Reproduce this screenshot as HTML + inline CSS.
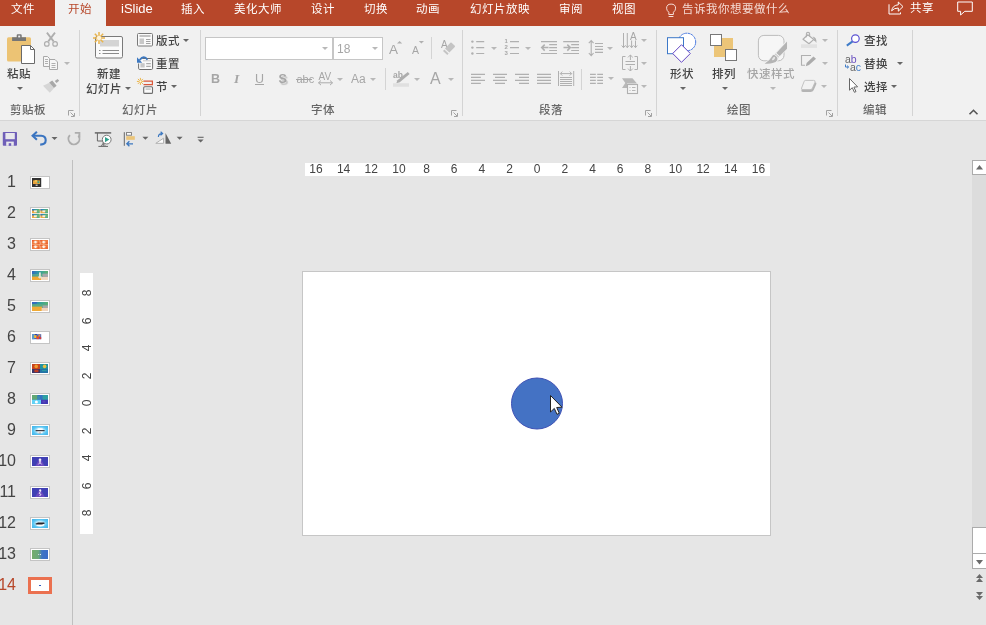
<!DOCTYPE html>
<html lang="zh-CN">
<head>
<meta charset="utf-8">
<title>PowerPoint</title>
<style>
html,body{margin:0;padding:0;}
body{width:986px;height:625px;overflow:hidden;background:#e6e6e6;position:relative;font-family:"Liberation Sans","Noto Sans CJK SC",sans-serif;font-size:12px;color:#444;}
.abs,.t,.tab,.gl,.sep,.arr,svg{position:absolute;}
#tabbar{position:absolute;left:0;top:0;width:986px;height:26px;background:#b7472a;}
.tab{top:-1px;height:20px;line-height:20px;color:#fff;font-size:11.5px;letter-spacing:.5px;font-weight:400;white-space:nowrap;}
#tabactive{position:absolute;left:55px;top:0;width:51px;height:26px;background:#f1f1f1;}
#ribbon{position:absolute;left:0;top:26px;width:986px;height:94px;background:#f1f1f1;border-bottom:1px solid #d6d6d6;}
.t{white-space:nowrap;font-size:11.5px;letter-spacing:.5px;font-weight:500;line-height:14px;height:14px;color:#444;}
.gl{white-space:nowrap;font-size:11.5px;letter-spacing:.5px;font-weight:500;line-height:14px;height:14px;color:#666;top:103px;}
.dis{color:#a6a6a6;}
.sep{width:1px;background:#d4d4d4;}
.gsep{top:30px;height:86px;}
.arr{width:0;height:0;border-left:3px solid transparent;border-right:3px solid transparent;border-top:3px solid #666;}
.arr.l{border-top-color:#b8b8b8;}
.box{position:absolute;background:#fff;border:1px solid #c6c6c6;box-sizing:border-box;}

.rn{position:absolute;width:20px;text-align:center;font-size:12px;line-height:14px;color:#444;}
.rv{position:absolute;width:20px;height:14px;text-align:center;font-size:12px;line-height:14px;color:#444;transform:rotate(-90deg);}
.sn{position:absolute;left:-20px;width:36px;text-align:right;font-size:16px;line-height:20px;height:20px;}
.th{position:absolute;left:30px;width:20px;height:13px;border:1px solid #c4c4c4;box-sizing:border-box;background:#fff;overflow:hidden;}
.th i{position:absolute;display:block;left:.5px;top:.5px;right:.5px;bottom:.5px;}

#tabbar,#rib-content,#panel,#editor{will-change:transform;}
#th14 i{left:0;top:0;right:0;bottom:0;}
#th14 i:after{content:"";position:absolute;left:8px;top:5px;width:2px;height:1.3px;background:#2f5cc0;}
</style>
</head>
<body>
<!-- TAB BAR -->
<div id="tabbar">
  <div id="tabactive"></div>
  <div class="tab" style="left:11px;">文件</div>
  <div class="tab" style="left:68px;color:#b7472a;">开始</div>
  <div class="tab" style="left:121px;top:-1.5px;letter-spacing:0;font-size:13px;">iSlide</div>
  <div class="tab" style="left:181px;">插入</div>
  <div class="tab" style="left:234px;">美化大师</div>
  <div class="tab" style="left:311px;">设计</div>
  <div class="tab" style="left:364px;">切换</div>
  <div class="tab" style="left:416px;">动画</div>
  <div class="tab" style="left:470px;">幻灯片放映</div>
  <div class="tab" style="left:559px;">审阅</div>
  <div class="tab" style="left:612px;">视图</div>
  <div class="tab" style="left:682px;color:#f4d9d2;">告诉我你想要做什么</div>
  <div class="tab" style="left:910px;top:-2px;">共享</div>
</div>
<!-- RIBBON -->
<div id="ribbon"></div>
<div id="rib-content">
  <!-- clipboard -->
  <div class="t" style="left:7px;top:67px;">粘贴</div>
  <div class="arr" style="left:17px;top:87px;"></div>
  <div class="arr l" style="left:64px;top:62px;"></div>
  <div class="gl" style="left:10px;">剪贴板</div>
  <div class="sep gsep" style="left:79px;"></div>
  <!-- slides -->
  <div class="t" style="left:97px;top:67px;">新建</div>
  <div class="t" style="left:86px;top:82px;">幻灯片</div>
  <div class="arr" style="left:125px;top:87px;"></div>
  <div class="t" style="left:156px;top:34px;">版式</div>
  <div class="arr" style="left:183px;top:39px;"></div>
  <div class="t" style="left:156px;top:57px;">重置</div>
  <div class="t" style="left:156px;top:80px;">节</div>
  <div class="arr" style="left:171px;top:85px;"></div>
  <div class="gl" style="left:122px;">幻灯片</div>
  <div class="sep gsep" style="left:200px;"></div>
  <!-- font -->
  <div class="box" style="left:205px;top:37px;width:128px;height:23px;"></div>
  <div class="arr l" style="left:322px;top:47px;"></div>
  <div class="box" style="left:333px;top:37px;width:50px;height:23px;"></div>
  <div class="t dis" style="left:337px;top:42px;letter-spacing:0;font-size:12px;">18</div>
  <div class="arr l" style="left:372px;top:47px;"></div>
  <div class="t dis" style="left:211px;top:72px;letter-spacing:0;font-size:12.5px;font-weight:bold;">B</div>
  <div class="t dis" style="left:234px;top:72px;letter-spacing:0;font-size:13.5px;font-style:italic;font-weight:bold;font-family:'Liberation Serif',serif;">I</div>
  <div class="t dis" style="left:255px;top:72px;letter-spacing:0;font-size:12.5px;">U</div>
  <div class="abs" style="left:255px;top:84px;width:9px;height:1px;background:#a6a6a6;"></div>
  <div class="t dis" style="left:278.5px;top:72px;letter-spacing:0;font-size:12.5px;font-weight:bold;text-shadow:1.5px 1.5px 1px #c4c4c4;">S</div>
  <div class="t dis" style="left:296.5px;top:72px;letter-spacing:0;font-size:11px;">abc</div>
  <div class="abs" style="left:296px;top:79px;width:16px;height:1px;background:#a6a6a6;"></div>
  <div class="t dis" style="left:318.5px;top:70px;letter-spacing:0;font-size:10px;">AV</div>
  <div class="arr l" style="left:337px;top:78px;"></div>
  <div class="t dis" style="left:351px;top:72px;letter-spacing:0;font-size:12px;">Aa</div>
  <div class="arr l" style="left:370px;top:78px;"></div>
  <div class="sep" style="left:385px;top:68px;height:22px;"></div>
  <div class="t dis" style="left:393px;top:68.2px;letter-spacing:0;font-size:8.5px;font-weight:bold;">ab</div>
  <div class="arr l" style="left:414px;top:78px;"></div>
  <div class="t dis" style="left:430px;top:71.5px;letter-spacing:0;font-size:16px;">A</div>
  <div class="arr l" style="left:448px;top:78px;"></div>
  <div class="t dis" style="left:389px;top:43px;letter-spacing:0;font-size:13.5px;">A</div>
  <div class="t dis" style="left:412px;top:43px;letter-spacing:0;font-size:10.5px;">A</div>
  <div class="t dis" style="left:441px;top:38px;letter-spacing:0;font-size:10px;">A</div>
  <div class="sep" style="left:431px;top:37px;height:22px;"></div>
  <div class="gl" style="left:311px;">字体</div>
  <div class="sep gsep" style="left:462px;"></div>
  <!-- paragraph -->
  <div class="arr l" style="left:491px;top:47px;"></div>
  <div class="arr l" style="left:525px;top:47px;"></div>
  <div class="arr l" style="left:607px;top:47px;"></div>
  <div class="arr l" style="left:608px;top:77px;"></div>
  <div class="arr l" style="left:641px;top:39px;"></div>
  <div class="arr l" style="left:641px;top:62px;"></div>
  <div class="arr l" style="left:641px;top:85px;"></div>
  <div class="sep" style="left:581px;top:69px;height:21px;"></div>
  <div class="t dis" style="left:504.5px;top:38px;letter-spacing:0;font-size:6px;line-height:6px;height:18px;width:4px;white-space:normal;font-weight:bold;">1<br>2<br>3</div>
  <div class="t dis" style="left:630px;top:30px;letter-spacing:0;font-size:10px;">A</div>
  <div class="gl" style="left:539px;">段落</div>
  <div class="sep gsep" style="left:656px;"></div>
  <!-- drawing -->
  <div class="t" style="left:670px;top:67px;">形状</div>
  <div class="arr" style="left:680px;top:87px;"></div>
  <div class="t" style="left:712px;top:67px;">排列</div>
  <div class="arr" style="left:722px;top:87px;"></div>
  <div class="t dis" style="left:747px;top:67px;">快速样式</div>
  <div class="arr l" style="left:770px;top:87px;"></div>
  <div class="arr l" style="left:822px;top:39px;"></div>
  <div class="arr l" style="left:822px;top:62px;"></div>
  <div class="arr l" style="left:821px;top:85px;"></div>
  <div class="gl" style="left:727px;">绘图</div>
  <div class="sep gsep" style="left:837px;"></div>
  <!-- editing -->
  <div class="t" style="left:864px;top:34px;">查找</div>
  <div class="t" style="left:864px;top:57px;">替换</div>
  <div class="arr" style="left:897px;top:62px;"></div>
  <div class="t" style="left:864px;top:80px;">选择</div>
  <div class="arr" style="left:891px;top:85px;"></div>
  <div class="t" style="left:845px;top:54px;letter-spacing:0;font-size:10.5px;line-height:11px;height:11px;color:#666;">a<span style="color:#6a50c0">b</span></div>
  <div class="t" style="left:850px;top:61.5px;letter-spacing:0;font-size:10.5px;line-height:11px;height:11px;color:#666;">a<span style="color:#3f7cc8">c</span></div>
  <div class="gl" style="left:863px;">编辑</div>
  <div class="sep gsep" style="left:912px;"></div>
</div>
<!-- ICONS -->
<div id="icons">
<svg id="ribsvg" style="left:0;top:0;" width="986" height="160" viewBox="0 0 986 160" fill="none">
<!-- paste -->
<g id="ic-paste">
  <rect x="7" y="37.3" width="24" height="24.3" rx="1.5" fill="#ecc374"/>
  <path d="M16.7 37.3 V35.2 Q16.7 34.2 17.7 34.2 H20.7 Q21.7 34.2 21.7 35.2 V37.3 H26 V41 H12.1 V37.3 Z" fill="#767676"/>
  <rect x="18.2" y="35.6" width="2" height="1.8" fill="#f1f1f1"/>
  <path d="M21.5 45.5 H30.5 L34.5 49.5 V63.5 H21.5 Z" fill="#fff" stroke="#6a6a6a" stroke-width="1"/>
  <path d="M30.5 45.5 V49.5 H34.5" stroke="#6a6a6a" stroke-width="1" fill="none"/>
</g>
<!-- cut -->
<g id="ic-cut" stroke="#aeaeae" fill="none">
  <path d="M46.9 32.6 L53.6 41.4 M55 32.6 L48.3 41.4" stroke-width="1.8"/>
  <circle cx="46.8" cy="43.9" r="2.3" stroke-width="1.2"/>
  <circle cx="55.1" cy="43.9" r="2.3" stroke-width="1.2"/>
</g>
<!-- copy -->
<g id="ic-copy" stroke="#a8a8a8" stroke-width="1" fill="#f6f6f6">
  <path d="M43.5 56.5 H47.5 L49.5 58.5 V66.5 H43.5 Z"/>
  <path d="M49.5 59.5 H55 L57.5 62 V69.5 H49.5 Z"/>
  <path d="M45 59.5 H48 M45 61.5 H48 M45 63.5 H48 M51.5 63.5 H55.5 M51.5 65.5 H55.5 M51.5 67.5 H55.5" stroke-width=".9"/>
</g>
<!-- format painter -->
<g id="ic-fp">
  <path d="M43 85.8 L49.4 82.8 L53.9 88.3 L49.8 92.8 Z" fill="#d6d6d6"/>
  <path d="M49.2 82.6 L52.3 80.6 L56.6 85.7 L53.9 88.1 Z" fill="#a8a8a8"/>
  <path d="M54.8 80.9 L57.6 78.9 L59.2 80.7 L56.5 83 Z" fill="#a8a8a8"/>
</g>
<!-- dialog launchers -->
<g id="ic-dl" stroke="#a2a2a2" stroke-width="1" fill="none">
  <path d="M68.5 115.5 V110.5 H73.5"/><path d="M70.5 112.5 L74 116 M74.5 113 V116.5 H71" />
  <path d="M451.5 115.5 V110.5 H456.5"/><path d="M453.5 112.5 L457 116 M457.5 113 V116.5 H454" />
  <path d="M645.5 115.5 V110.5 H650.5"/><path d="M647.5 112.5 L651 116 M651.5 113 V116.5 H648" />
  <path d="M826.5 115.5 V110.5 H831.5"/><path d="M828.5 112.5 L832 116 M832.5 113 V116.5 H829" />
</g>
<!-- new slide -->
<g id="ic-newslide">
  <rect x="95.5" y="36.5" width="27" height="21.5" rx="1.5" fill="#fafafa" stroke="#7a7a7a" stroke-width="1"/>
  <rect x="100" y="40" width="19" height="6.5" fill="#d4d4d4"/>
  <path d="M102.5 50.5 H119 M102.5 53.5 H119" stroke="#8a8a8a" stroke-width="1"/>
  <path d="M99 50.5 H100.5 M99 53.5 H100.5" stroke="#8a8a8a" stroke-width="1"/>
  <g stroke="#e9b44c" stroke-width="1.5">
    <path d="M99 32 V44 M93 38 H105 M94.8 33.8 L103.2 42.2 M103.2 33.8 L94.8 42.2"/>
  </g>
  <circle cx="99" cy="38" r="2.2" fill="#fdf3dc"/>
</g>
<!-- layout -->
<g id="ic-layout">
  <rect x="137.5" y="33.5" width="15" height="12.5" rx="1" fill="#fafafa" stroke="#7a7a7a"/>
  <path d="M139.5 36 H150.5" stroke="#8a8a8a"/>
  <rect x="139.5" y="38.5" width="4.5" height="5.5" fill="#c8c8c8"/>
  <path d="M146 39.5 H150.5 M146 41.5 H150.5 M146 43.5 H150.5" stroke="#9a9a9a" stroke-width=".9"/>
</g>
<!-- reset -->
<g id="ic-reset">
  <rect x="138.6" y="58.5" width="14" height="11" rx="1.2" fill="#fafafa" stroke="#6e6e6e"/>
  <path d="M143 60.8 H151" stroke="#c8c8c8" stroke-width="1"/>
  <rect x="140.4" y="63.2" width="4.3" height="4.3" fill="#c8c8c8"/>
  <path d="M146.2 63.7 H150.8 M146.2 66.3 H150.8" stroke="#9a9a9a" stroke-width="1"/>
  <path d="M136 55 H142 L142.6 58 L140 61.5 V63.5 H136 Z" fill="#f1f1f1"/>
  <path d="M147.4 59.8 Q144 54.2 139.6 60" stroke="#3c78c0" stroke-width="1.8" fill="none"/>
  <path d="M137 57.3 V62.7 H142.2 Z" fill="#3c78c0"/>
</g>
<!-- section -->
<g id="ic-section">
  <path d="M143.5 81.1 H152.4 V84.6 H143.5" stroke="#d9583a" stroke-width="1.2" fill="none"/>
  <rect x="143.7" y="86.8" width="8.8" height="6.6" rx="1" fill="#fafafa" stroke="#6e6e6e" stroke-width="1.1"/>
  <rect x="145.6" y="88.3" width="5.2" height="1.6" fill="#c8c8c8"/>
  <g stroke="#e9b44c" stroke-width="1">
    <path d="M140.4 77.9 V84.9 M136.9 81.4 H143.9 M137.9 78.9 L142.9 83.9 M142.9 78.9 L137.9 83.9"/>
  </g>
  <circle cx="140.4" cy="81.4" r="1.1" fill="#fdf3dc"/>
</g>
<!-- font group icons -->
<g id="ic-font">
  <path d="M397 43.5 L399.6 41 L402.2 43.5 Z" fill="#b0b0b0"/>
  <path d="M418.8 41 H424 L421.4 43.5 Z" fill="#b0b0b0"/>
  <path d="M318.5 82.8 H332.5 M321 80.5 L318.5 82.8 L321 85.1 M330 80.5 L332.5 82.8 L330 85.1" stroke="#ababab" stroke-width="1"/>
  <!-- eraser -->
  <path d="M445 48.6 L450.4 42.8 Q451 42.2 451.6 42.8 L454.8 45.8 Q455.4 46.4 454.8 47 L449.4 52.6 Z" fill="#c4c4c4"/>
  <path d="M443 51 L444.3 49.6 L448.6 53.6 L447.3 55 Z" fill="#c4c4c4"/>
  <!-- highlighter -->
  <path d="M407.8 72 L409.6 74 L399.8 82.2 L396.3 83.2 L397.4 80.2 Z" fill="#adadad"/>
  <rect x="393" y="83.2" width="16" height="3.6" fill="#e0e0e0"/>
</g>
<!-- paragraph icons -->
<g id="ic-para" stroke="#b0b0b0" stroke-width="1.1" fill="none">
  <path d="M476.2 41.6 H484.2 M476.2 47.6 H484.2 M476.2 53.5 H484.2 "/>
  <circle cx="472.4" cy="41.6" r="1.2" fill="#b0b0b0" stroke="none"/>
  <circle cx="472.4" cy="47.6" r="1.2" fill="#b0b0b0" stroke="none"/>
  <circle cx="472.4" cy="53.5" r="1.2" fill="#b0b0b0" stroke="none"/>
  <path d="M510 41.6 H519 M510 47.6 H519 M510 53.5 H519 "/>
  <path d="M541 41.6 H557 M541 53.5 H557 M549.2 44.6 H557 M549.2 47.6 H557 M549.2 50.5 H557 "/>
  <path d="M541.5 47.6 H548.5 M544.7 44.6 L541.7 47.6 L544.7 50.6" stroke-width="1.5"/>
  <path d="M563.2 41.6 H579 M563.2 53.5 H579 M571.2 44.6 H579 M571.2 47.6 H579 M571.2 50.5 H579 "/>
  <path d="M563.5 47.6 H570.5 M567.3 44.6 L570.3 47.6 L567.3 50.6" stroke-width="1.5"/>
  <path d="M595 43.5 H603 M595 46.5 H603 M595 49.4 H603 M595 52.4 H603 "/>
  <path d="M591.2 40.8 V55.4 M588.8 43.2 L591.2 40.6 L593.6 43.2 M588.8 53 L591.2 55.6 L593.6 53"/>
  <path d="M471 74.4 H485 M471 77.4 H480.8 M471 80.4 H485 M471 83.4 H480.8 M493 74.4 H507 M495 77.4 H505 M493 80.4 H507 M495 83.4 H505 M515 74.4 H529 M519 77.4 H529 M515 80.4 H529 M519 83.4 H529 M537 74.4 H551 M537 77.4 H551 M537 80.4 H551 M537 83.4 H551 M590 74.4 H595.8 M597.2 74.4 H603 M590 77.4 H595.8 M597.2 77.4 H603 M590 80.4 H595.8 M597.2 80.4 H603 M590 83.4 H595.8 M597.2 83.4 H603 "/>
  <path d="M560 77.5 H572 M560 79.5 H572 M560 81.5 H572 M560 83.5 H572 M560 85.5 H572 " stroke-width="1"/>
  <path d="M558.5 71 V86 M573.7 71 V86 M560.3 73.6 H571.7 M562.3 71.6 L560.3 73.6 L562.3 75.6 M569.7 71.6 L571.7 73.6 L569.7 75.6" stroke-width="1"/>
  <path d="M623.5 33 V47.5 M627.3 33 V47.5 M621.7 45.5 L623.5 47.7 L625.3 45.5 M625.5 45.5 L627.3 47.7 L629.1 45.5 M631.6 40.5 V47.5 M635.5 40.5 V47.5 M629.9 45.5 L631.6 47.7 L633.3 45.5 M633.8 45.5 L635.5 47.7 L637.2 45.5" stroke-width="1"/>
  <path d="M625.5 56.5 H622.5 V69.5 H625.5 M634.5 56.5 H637.5 V69.5 H634.5" stroke-width="1"/>
  <path d="M630.4 55 V60 M628 57.4 L630.4 55 L632.8 57.4 M630.4 66 V71 M628 68.6 L630.4 71 L632.8 68.6 M625.5 61.5 H635 M625.5 64.5 H635" stroke-width="1"/>
  <path d="M622 78.2 H632.5 L637 83.5 H627 V88 H622 L625.3 83 Z" fill="#b8b8b8" stroke="none"/>
  <rect x="627.5" y="84.5" width="10" height="9" fill="#f4f4f4" stroke-width="1.1"/>
  <path d="M629.5 87.5 H630.5 M632 87.5 H635.5 M629.5 90.5 H630.5 M632 90.5 H635.5" stroke-width=".9"/>
</g>
<!-- drawing icons -->
<g id="ic-draw">
  <circle cx="686.9" cy="42" r="8.8" fill="#fff" stroke="#4a7ae0" stroke-width="1" stroke-dasharray="3 .5"/>
  <rect x="667.5" y="37.7" width="16" height="16" fill="#fff" stroke="#3c78c8" stroke-width="1"/>
  <path d="M681.5 44.7 L690.3 53.5 L681.5 62.3 L672.7 53.5 Z" fill="#fff" stroke="#6244c2" stroke-width="1"/>
  <rect x="714" y="38" width="19" height="19" fill="#ecc578"/>
  <rect x="710.5" y="34.5" width="11" height="11" fill="#fff" stroke="#777" stroke-width="1"/>
  <rect x="725.5" y="49.5" width="11" height="11" fill="#fff" stroke="#777" stroke-width="1"/>
  <!-- quick styles -->
  <rect x="758.4" y="35.4" width="25.6" height="25.4" rx="5.5" fill="#f6f6f6" stroke="#bcbcbc" stroke-width="1"/>
  <g stroke="#f1f1f1" stroke-width="1.6" stroke-linejoin="round" paint-order="stroke" style="paint-order:stroke">
  <path d="M787 41.4 V48.7 L779.7 56 L776.3 52.9 Z" fill="#b4b4b4"/>
  <path d="M775.6 53.6 L779 56.8 L777.8 58 L774.4 54.8 Z" fill="#c4c4c4"/>
  <path d="M774.4 55 Q778.6 57.4 777 60.6 Q774.6 64.2 764.6 63.7 Q769.6 60.6 772 56.4 Q773 54.6 774.4 55 Z" fill="#b4b4b4"/>
  </g>
  <ellipse cx="773.6" cy="58.6" rx="1.1" ry="2" transform="rotate(40 773.6 58.6)" fill="#e6e6e6"/>
  <!-- fill bucket -->
  <path d="M807.8 34.8 L813.8 39.4 L809 43.8 L803 39.2 Z" fill="#f6f6f6" stroke="#b0b0b0" stroke-width="1.2" stroke-linejoin="round"/>
  <path d="M806.4 37.2 V33.8 Q806.4 32.4 808 32.4 Q809.6 32.4 809.6 33.8 V36.4" fill="none" stroke="#b0b0b0" stroke-width="1.1"/>
  <path d="M812.6 36.6 Q817 37.6 816.4 43 Q815.4 41 813.4 40.6 L814.4 39.4 Z" fill="#b0b0b0"/>
  <rect x="801" y="44.3" width="16" height="3.6" fill="#e2e2e2"/>
  <!-- outline -->
  <path d="M811 55.5 H801.5 V65.2 H805" fill="none" stroke="#b0b0b0" stroke-width="1.1"/>
  <path d="M813.4 56.4 L816 58.8 L809 65 L805.8 66.2 L806.6 63 Z" fill="#ababab"/>
  <!-- effects -->
  <path d="M805.4 82.2 H814.6 Q817 82.2 816.2 84.4 L813.6 90.2 Q812.8 92 810.6 92 H803 Q800.8 92 801.6 89.8 L804 83.8 Q804.6 82.2 805.4 82.2 Z" fill="#b4b4b4"/>
  <path d="M805.2 80.4 H813.6 Q815.6 80.4 815 82.2 L812.4 88.2 Q811.8 89.6 810 89.6 H802.8 Q801 89.6 801.6 88 L804 81.8 Q804.4 80.4 805.2 80.4 Z" fill="#f2f2f2" stroke="#bdbdbd" stroke-width=".9"/>
</g>
<!-- editing icons -->
<g id="ic-edit">
  <path d="M852.6 41.4 L846.8 45.6" stroke="#3f7cc8" stroke-width="2"/>
  <circle cx="855.4" cy="38.6" r="3.8" fill="#fff" stroke="#5a52d2" stroke-width="1.2"/>
  <path d="M845.5 64.5 V67 H848.5 M847 65.6 L848.6 67 L847 68.4" stroke="#3f7cc8" stroke-width="1" fill="none"/>
  <path d="M849.5 78.5 V90.2 L852.3 87.7 L854.4 92.3 L856 91.6 L853.9 87.1 L857.6 86.8 Z" fill="#fff" stroke="#666" stroke-width="1" stroke-linejoin="round"/>
  <path d="M969.5 114.3 L973.5 110.3 L977.5 114.3" stroke="#555" stroke-width="1.6" fill="none"/>
</g>
<!-- tab bar icons -->
<g id="ic-tab" stroke="#fff" fill="none" stroke-width="1">
  <path d="M668.8 12.3 Q666.6 10.5 666.6 8.2 Q666.6 4.1 671.1 4.1 Q675.6 4.1 675.6 8.2 Q675.6 10.5 673.4 12.3 V14.5 H668.8 Z M668.6 16.5 H673.4" stroke="#f6dfd9"/>
  <path d="M889 4.3 V14 H900.5 V12.4"/>
  <path d="M891.6 10.8 Q892.6 5.2 898.3 4.8 V2 L903 6.6 L898.3 11.2 V8 Q894 8 891.6 10.8 Z"/>
  <path d="M957.7 2 H972.3 V11.3 H964.8 L960.6 15 V11.3 H957.7 Z"/>
</g>
<!-- QAT icons -->
<g id="ic-qat">
  <rect x="2.8" y="132" width="14.2" height="13.8" rx=".8" fill="#6f5fb8"/>
  <rect x="5.4" y="133" width="9.4" height="6.2" fill="#e8e8ec"/>
  <rect x="6.2" y="141.6" width="7.6" height="4.2" fill="#e8e8ec"/>
  <rect x="8.7" y="143.2" width="2.5" height="2.6" fill="#6f5fb8"/>
  <path d="M33.4 135.8 H41.2 Q45.7 136 45.7 140.2 Q45.7 144.5 40.2 144.6" stroke="#3a74c0" stroke-width="2.1" fill="none"/>
  <path d="M36.9 131.8 L32.6 135.8 L36.9 139.8" stroke="#3a74c0" stroke-width="2.1" fill="none"/>
  <path d="M51.5 137 H57.5 L54.5 140 Z" fill="#666"/>
  <path d="M69.9 135.2 A5.5 5.5 0 1 0 78.4 135.6" stroke="#adadad" stroke-width="1.9" fill="none"/>
  <path d="M74.8 132.9 H79.4 V137.6" stroke="#adadad" stroke-width="1.9" fill="none"/>
  <path d="M94.8 132.9 H111.2" stroke="#666" stroke-width="1.5"/>
  <path d="M97.4 133 V141 H103 M103.2 141 V146 M98.4 146.4 H108" stroke="#666" stroke-width="1" fill="none"/>
  <path d="M103.2 143.5 L101 146 M103.2 143.5 L105.4 146" stroke="#666" stroke-width=".8" fill="none"/>
  <circle cx="106.7" cy="139.6" r="4.4" fill="#fff" stroke="#777" stroke-width="1"/>
  <path d="M105 136.9 L109.4 139.6 L105 142.3 Z" fill="#2fa08c"/>
  <path d="M124.3 132.2 V145.8" stroke="#666" stroke-width="1"/>
  <rect x="126.5" y="132.6" width="5" height="2.6" fill="#fff" stroke="#777" stroke-width=".9"/>
  <rect x="126.2" y="136.2" width="8.6" height="3.6" fill="#ecc578"/>
  <path d="M126.8 143.8 H133 M129.4 141.3 L126.8 143.8 L129.4 146.3" stroke="#3c78c0" stroke-width="1.3" fill="none"/>
  <path d="M142.4 136.8 H148.4 L145.4 139.8 Z" fill="#666"/>
  <path d="M155.8 143.3 H163.6 V138.2 Z" fill="#fff" stroke="#b0b0b0" stroke-width="1"/>
  <path d="M165.5 133 V143.8 H171.2 Z" fill="#666"/>
  <path d="M158.4 137 Q158.4 133.6 162 133.6 M160.6 131.8 L162.6 133.6 L160.6 135.4" stroke="#3c78c0" stroke-width="1.2" fill="none"/>
  <path d="M176.6 136.8 H182.6 L179.6 139.8 Z" fill="#666"/>
  <path d="M197.6 137.3 H203.6" stroke="#666" stroke-width="1.1"/>
  <path d="M197.6 139.6 H203.6 L200.6 142.6 Z" fill="#666"/>
</g>
</svg>
</div>
<!-- QAT -->
<div id="qat"></div>
<!-- SLIDE PANEL -->
<div id="panel">
<svg style="left:0;top:0" width="0" height="0"><defs>
<filter id="bl" x="-10%" y="-10%" width="120%" height="120%"><feGaussianBlur stdDeviation=".45"/></filter>
<linearGradient id="g4" x1="0" x2="1" y1="0" y2="0"><stop offset="0" stop-color="#3468c0"/><stop offset=".45" stop-color="#2fa0a0"/><stop offset="1" stop-color="#62b070"/></linearGradient>
<radialGradient id="g9" cx=".5" cy=".5" r=".6"><stop offset="0" stop-color="#fff"/><stop offset=".35" stop-color="#c8ecfa"/><stop offset=".7" stop-color="#5cc6f2"/><stop offset="1" stop-color="#48b8ec"/></radialGradient>
<linearGradient id="g13" x1="0" x2="1" y1="0" y2="0"><stop offset="0" stop-color="#74ad6c"/><stop offset=".42" stop-color="#6aa87c"/><stop offset=".62" stop-color="#3f74c4"/><stop offset="1" stop-color="#3a6cc8"/></linearGradient>
</defs></svg>
  <div class="sn" style="top:171.5px;color:#444;">1</div>
  <div class="th" id="th1" style="top:176.0px;"><svg style="left:1px;top:1px;" width="16" height="9" viewBox="0 0 16 9"><g filter="url(#bl)"><rect width="9.2" height="9" fill="#303030"/><rect x="1" y="2.4" width="7" height="3.6" fill="#e8a23a"/><rect x="2.6" y="2" width="2.6" height="2" fill="#f0c050"/><rect x="5.4" y="3.2" width="2" height="2" fill="#3aa090"/><rect x="3.6" y="6.6" width="2" height="1.2" fill="#ddd"/></g></svg></div>
  <div class="sn" style="top:202.5px;color:#444;">2</div>
  <div class="th" id="th2" style="top:207.0px;"><svg style="left:1px;top:1px;" width="16" height="9" viewBox="0 0 16 9"><g filter="url(#bl)"><rect width="16" height="9" fill="#fff"/><g transform="translate(0,0)"><rect width="7.6" height="4.1" fill="#e9aa45"/><rect width="7.6" height="1.6" fill="url(#g4)"/><rect x="3.8" y="1.2" width="3.8" height="1.6" fill="#6db578"/><rect x="2" y="1.4" width="3" height="1.8" fill="#f4ece0"/><rect x="4.6" y="2.6" width="3" height="1.5" fill="#58b088"/></g><g transform="translate(8.4,0)"><rect width="7.6" height="4.1" fill="#e9aa45"/><rect width="7.6" height="1.6" fill="url(#g4)"/><rect x="3.8" y="1.2" width="3.8" height="1.6" fill="#6db578"/><rect x="2" y="1.4" width="3" height="1.8" fill="#f4ece0"/><rect x="4.6" y="2.6" width="3" height="1.5" fill="#58b088"/></g><g transform="translate(0,4.9)"><rect width="7.6" height="4.1" fill="#e9aa45"/><rect width="7.6" height="1.6" fill="url(#g4)"/><rect x="3.8" y="1.2" width="3.8" height="1.6" fill="#6db578"/><rect x="2" y="1.4" width="3" height="1.8" fill="#f4ece0"/><rect x="4.6" y="2.6" width="3" height="1.5" fill="#58b088"/></g><g transform="translate(8.4,4.9)"><rect width="7.6" height="4.1" fill="#e9aa45"/><rect width="7.6" height="1.6" fill="url(#g4)"/><rect x="3.8" y="1.2" width="3.8" height="1.6" fill="#6db578"/><rect x="2" y="1.4" width="3" height="1.8" fill="#f4ece0"/><rect x="4.6" y="2.6" width="3" height="1.5" fill="#58b088"/></g></g></svg></div>
  <div class="sn" style="top:233.5px;color:#444;">3</div>
  <div class="th" id="th3" style="top:238.0px;"><svg style="left:1px;top:1px;" width="16" height="9" viewBox="0 0 16 9"><g filter="url(#bl)"><rect width="16" height="9" fill="#f07a3c"/><rect x="7.7" width=".7" height="9" fill="#f8d8c0"/><rect y="4.2" width="16" height=".6" fill="#f5b890"/><g transform="translate(0,0)"><rect x="2.6" y=".8" width="1.8" height="2.6" fill="#fdf4ea"/><rect x="1.6" y="1.6" width="3.8" height=".9" fill="#fdf4ea"/><rect x="0" y="0" width="1.6" height="1.4" fill="#e85a30"/><rect x="5.6" y="2.6" width="2" height="1.4" fill="#ec6232"/></g><g transform="translate(8.2,0)"><rect x="2.6" y=".8" width="1.8" height="2.6" fill="#fdf4ea"/><rect x="1.6" y="1.6" width="3.8" height=".9" fill="#fdf4ea"/><rect x="0" y="0" width="1.6" height="1.4" fill="#e85a30"/><rect x="5.6" y="2.6" width="2" height="1.4" fill="#ec6232"/></g><g transform="translate(0,4.7)"><rect x="2.6" y=".8" width="1.8" height="2.6" fill="#fdf4ea"/><rect x="1.6" y="1.6" width="3.8" height=".9" fill="#fdf4ea"/><rect x="0" y="0" width="1.6" height="1.4" fill="#e85a30"/><rect x="5.6" y="2.6" width="2" height="1.4" fill="#ec6232"/></g><g transform="translate(8.2,4.7)"><rect x="2.6" y=".8" width="1.8" height="2.6" fill="#fdf4ea"/><rect x="1.6" y="1.6" width="3.8" height=".9" fill="#fdf4ea"/><rect x="0" y="0" width="1.6" height="1.4" fill="#e85a30"/><rect x="5.6" y="2.6" width="2" height="1.4" fill="#ec6232"/></g></g></svg></div>
  <div class="sn" style="top:264.5px;color:#444;">4</div>
  <div class="th" id="th4" style="top:269.0px;"><svg style="left:1px;top:1px;" width="16" height="9" viewBox="0 0 16 9"><g filter="url(#bl)"><rect width="16" height="9" fill="url(#g4)"/><rect y="3" width="16" height="3" fill="#5fb088" opacity=".7"/><rect y="5.6" width="9" height="3.4" fill="#f0a832"/><rect x="10.4" y="2.6" width="5.6" height="3.6" fill="#a6a8aa"/><rect x="9" y="6" width="7" height="3" fill="#f2d8c0"/><rect x="7" y="1.4" width="1.8" height="6" fill="#e4e2d6"/><rect x="6.2" y="5.4" width="3.6" height="1.4" fill="#e8e0cc"/></g></svg></div>
  <div class="sn" style="top:295.5px;color:#444;">5</div>
  <div class="th" id="th5" style="top:300.0px;"><svg style="left:1px;top:1px;" width="16" height="9" viewBox="0 0 16 9"><g filter="url(#bl)"><rect width="16" height="9" fill="url(#g4)"/><rect y="2.2" width="16" height="3" fill="#5aac84"/><path d="M0 5 L1 4.2 L2 5 L3 4.2 L4 5 L5 4.2 L6 5 L7 4.2 L8 5 L9 4.2 L10 5 V9 H0 Z" fill="#f0aa34"/><rect x="10.6" y="3.4" width="5.4" height="2.8" fill="#a8a8aa"/><rect x="9.6" y="6" width="6.4" height="3" fill="#f0d4bc"/><rect x="0" y="0" width="5" height="1.4" fill="#3468c0"/></g></svg></div>
  <div class="sn" style="top:326.5px;color:#444;">6</div>
  <div class="th" id="th6" style="top:331.0px;"><svg style="left:1px;top:1px;" width="16" height="9" viewBox="0 0 16 9"><g filter="url(#bl)"><rect width="16" height="9" fill="#fff"/><rect x="0" y="1.2" width="9.2" height="5" fill="#3a62c8"/><rect x="0" y="1.2" width="2.4" height="5" fill="#5a9ac8"/><rect x="2.2" y="2" width="2.4" height="3" fill="#f0c038"/><rect x="4.4" y="3.2" width="2.6" height="3" fill="#e84a2a"/><rect x="6.4" y="1.6" width="2" height="2" fill="#f09030"/><rect x="7.6" y="4" width="1.6" height="2.2" fill="#d83a3a"/><rect x="3" y="1.2" width="2" height="1" fill="#2a3a90"/></g></svg></div>
  <div class="sn" style="top:357.5px;color:#444;">7</div>
  <div class="th" id="th7" style="top:362.0px;"><svg style="left:1px;top:1px;" width="16" height="9" viewBox="0 0 16 9"><g filter="url(#bl)"><rect width="8" height="5" fill="#c8441e"/><rect x="8" width="8" height="5" fill="#2492a0"/><rect y="5" width="8" height="4" fill="#3a3468"/><rect x="8" y="5" width="8" height="4" fill="#2372a6"/><circle cx="4.2" cy="2.4" r="1.8" fill="#f09a2c"/><circle cx="12.6" cy="2.4" r="1.8" fill="#e8c040"/><rect x="2.4" y="5.6" width="4" height="2.6" fill="#c03a24"/><rect x="10" y="6" width="4.6" height="1.2" fill="#2a9aa0"/></g></svg></div>
  <div class="sn" style="top:388.5px;color:#444;">8</div>
  <div class="th" id="th8" style="top:393.0px;"><svg style="left:1px;top:1px;" width="16" height="9" viewBox="0 0 16 9"><g filter="url(#bl)"><rect width="16" height="9" fill="#3272c2"/><rect width="5.4" height="4.8" fill="#62a874"/><rect x="10.6" width="5.4" height="4.8" fill="#2fa0a2"/><rect x="5" y="1" width="3" height="3" fill="#3a8ab0"/><rect y="4.8" width="9" height="4.2" fill="#62d2f6"/><rect x="9" y="4.8" width="7" height="4.2" fill="#4238b2"/><circle cx="4.4" cy="7" r="1.5" fill="#fff"/><rect x="10.4" y="5.6" width="3" height="2" fill="#5a44bc"/></g></svg></div>
  <div class="sn" style="top:419.5px;color:#444;">9</div>
  <div class="th" id="th9" style="top:424.0px;"><svg style="left:1px;top:1px;" width="16" height="9" viewBox="0 0 16 9"><g filter="url(#bl)"><rect width="16" height="9" fill="url(#g9)"/><rect x="5.6" y="2.2" width="5" height="5" fill="#fff" opacity=".85"/><rect x="3.6" y="4.1" width="9" height="1.1" fill="#2a2a30"/><rect x="6.6" y="6.6" width="2.4" height=".8" fill="#a88"/></g></svg></div>
  <div class="sn" style="top:450.5px;color:#444;">10</div>
  <div class="th" id="th10" style="top:455.0px;"><svg style="left:1px;top:1px;" width="16" height="9" viewBox="0 0 16 9"><g filter="url(#bl)"><rect width="16" height="9" fill="#4140b4"/><path d="M8 .6 L12.6 9 H3.4 Z" fill="#6c4cc0"/><circle cx="8" cy="2.8" r="1.3" fill="#f4f0fa"/><rect x="7.2" y="4" width="1.6" height="1.6" fill="#e8e0f4"/><path d="M6.4 7.4 L8 5.6 L9.6 7.4" stroke="#f0eaf8" stroke-width=".9" fill="none"/></g></svg></div>
  <div class="sn" style="top:481.5px;color:#444;">11</div>
  <div class="th" id="th11" style="top:486.0px;"><svg style="left:1px;top:1px;" width="16" height="9" viewBox="0 0 16 9"><g filter="url(#bl)"><rect width="16" height="9" fill="#4140b4"/><path d="M8 .4 L12.8 9 H3.2 Z" fill="#6a4abf"/><circle cx="8.2" cy="2.4" r="1.1" fill="#f4f0fa"/><path d="M8.6 3.4 L7.2 5.4 L9 6.4 L7.6 8" stroke="#efe8f8" stroke-width="1" fill="none"/></g></svg></div>
  <div class="sn" style="top:512.5px;color:#444;">12</div>
  <div class="th" id="th12" style="top:517.0px;"><svg style="left:1px;top:1px;" width="16" height="9" viewBox="0 0 16 9"><g filter="url(#bl)"><rect width="16" height="9" fill="url(#g9)"/><ellipse cx="8.2" cy="5.8" rx="4" ry="1.6" fill="#fff" opacity=".9"/><path d="M3.4 4.8 L6 3.6 H12.2 L12.8 4.6 L10 5.4 H4 Z" fill="#22222a"/></g></svg></div>
  <div class="sn" style="top:543.5px;color:#444;">13</div>
  <div class="th" id="th13" style="top:548.0px;"><svg style="left:1px;top:1px;" width="16" height="9" viewBox="0 0 16 9"><g filter="url(#bl)"><rect width="16" height="9" fill="url(#g13)"/><rect x="6.2" y="4" width="1" height="1" fill="#e6e6ee"/><rect x="8" y="4" width="1" height="1" fill="#e6e6ee"/></g></svg></div>
  <div class="sn" style="top:574.5px;color:#b7472a;">14</div>
  <div class="th" id="th14" style="left:28px;top:577px;width:24px;height:17px;border:3px solid #eb7150;"><i></i></div>
</div>
<!-- EDITOR -->
<div id="editor">
  <div class="abs" style="left:72px;top:160px;width:1px;height:465px;background:#c0c0c0;"></div>
  <div class="abs" id="hruler" style="left:305px;top:163px;width:465px;height:13px;background:#fff;"></div>
  <div class="rn" style="left:306.0px;top:162px;">16</div>
  <div class="rn" style="left:333.6px;top:162px;">14</div>
  <div class="rn" style="left:361.3px;top:162px;">12</div>
  <div class="rn" style="left:388.9px;top:162px;">10</div>
  <div class="rn" style="left:416.6px;top:162px;">8</div>
  <div class="rn" style="left:444.2px;top:162px;">6</div>
  <div class="rn" style="left:471.9px;top:162px;">4</div>
  <div class="rn" style="left:499.5px;top:162px;">2</div>
  <div class="rn" style="left:527.2px;top:162px;">0</div>
  <div class="rn" style="left:554.9px;top:162px;">2</div>
  <div class="rn" style="left:582.5px;top:162px;">4</div>
  <div class="rn" style="left:610.1px;top:162px;">6</div>
  <div class="rn" style="left:637.8px;top:162px;">8</div>
  <div class="rn" style="left:665.5px;top:162px;">10</div>
  <div class="rn" style="left:693.1px;top:162px;">12</div>
  <div class="rn" style="left:720.8px;top:162px;">14</div>
  <div class="rn" style="left:748.4px;top:162px;">16</div>
  <div class="abs" id="vruler" style="left:80px;top:273px;width:13px;height:261px;background:#fff;"></div>
  <div class="rv" style="left:76.5px;top:286.0px;">8</div>
  <div class="rv" style="left:76.5px;top:313.5px;">6</div>
  <div class="rv" style="left:76.5px;top:341.0px;">4</div>
  <div class="rv" style="left:76.5px;top:368.5px;">2</div>
  <div class="rv" style="left:76.5px;top:396.0px;">0</div>
  <div class="rv" style="left:76.5px;top:423.5px;">2</div>
  <div class="rv" style="left:76.5px;top:451.0px;">4</div>
  <div class="rv" style="left:76.5px;top:478.5px;">6</div>
  <div class="rv" style="left:76.5px;top:506.0px;">8</div>
  <div class="abs" id="slide" style="left:302px;top:271px;width:467px;height:263px;background:#fff;border:1px solid #c6c6c6;"></div>
  <svg style="left:505px;top:370px;" width="70" height="70" viewBox="0 0 70 70">
    <circle cx="32" cy="33.5" r="25.5" fill="#4472c4" stroke="#3d50b4" stroke-width="1"/>
    <path d="M45.5 25.5 V42 L49.3 38.4 L52 44.3 L54.3 43.3 L51.7 37.5 L57 37.2 Z" fill="#fff" stroke="#222" stroke-width="1" stroke-linejoin="miter"/>
  </svg>
  <!-- scrollbar -->
  <div class="abs" style="left:972px;top:160px;width:14px;height:409px;background:#dcdcdc;"></div>
  <div class="abs" style="left:972px;top:160px;width:15px;height:15px;background:#fff;border:1px solid #ababab;box-sizing:border-box;"></div>
  <div class="abs" style="left:972px;top:527px;width:15px;height:27px;background:#fff;border:1px solid #ababab;box-sizing:border-box;"></div>
  <div class="abs" style="left:972px;top:554px;width:15px;height:15px;background:#fff;border:1px solid #ababab;box-sizing:border-box;border-top:none;"></div>
  <svg style="left:972px;top:160px;" width="14" height="450" viewBox="0 0 14 450">
    <path d="M4 9.5 L7.5 5 L11 9.5 Z" fill="#6a6a6a"/>
    <path d="M4 400 L11 400 L7.5 404.5 Z" fill="#6a6a6a"/>
    <path d="M4 418 L7.5 414 L11 418 Z M4 422 L7.5 418 L11 422 Z" fill="#6a6a6a"/>
    <path d="M4 432 L11 432 L7.5 436 Z M4 436 L11 436 L7.5 440 Z" fill="#6a6a6a"/>
  </svg>
</div>
</body>
</html>
